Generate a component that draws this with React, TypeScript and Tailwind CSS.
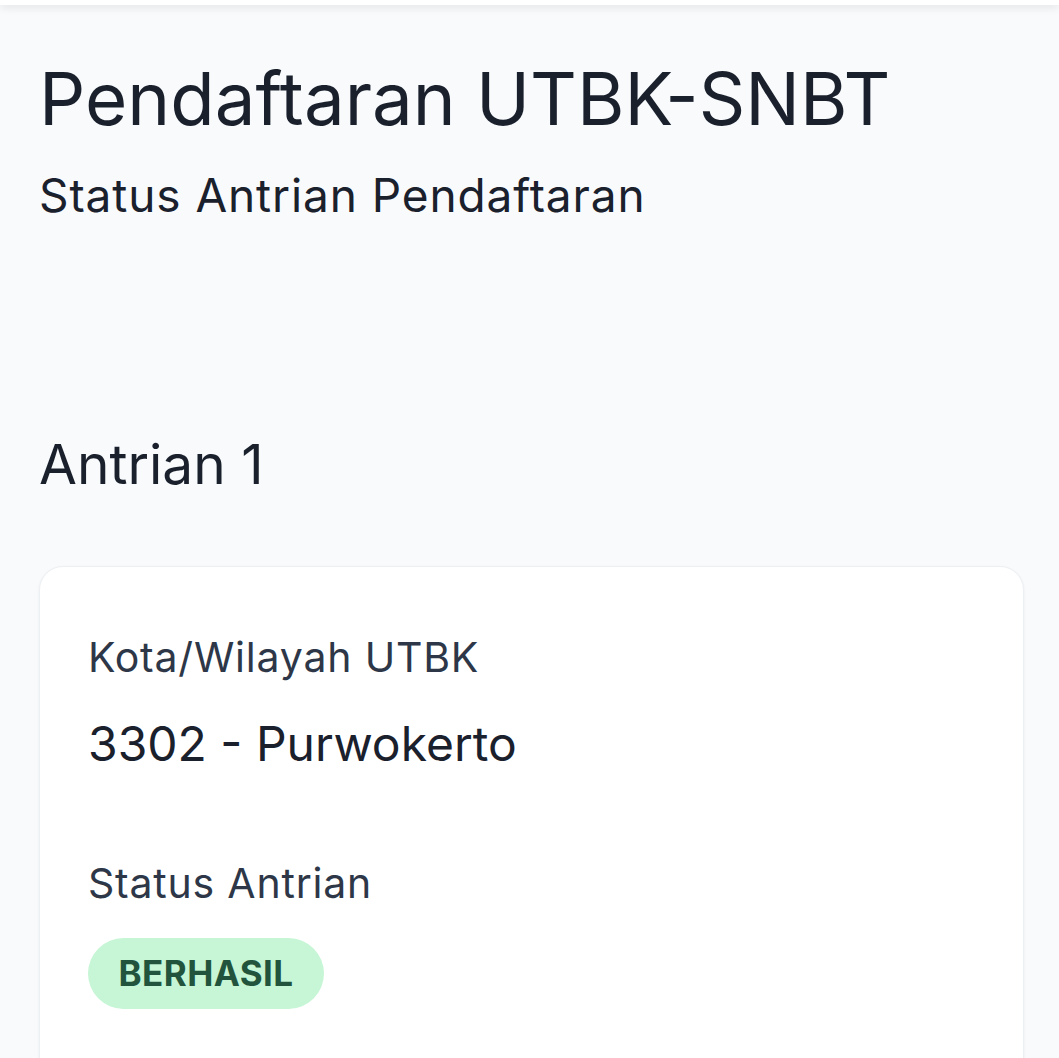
export default function App() {
  const font = { fontFamily: "Inter, 'Noto Sans', sans-serif" };
  return (
    <div style={font} className="min-h-[1058px] overflow-hidden bg-[#f8fafc] text-[#1a202c]">
      <div className="h-[5px] bg-white shadow-[0_2px_8px_rgba(0,0,0,0.12)]" />
      <div className="px-[39px] pt-[50px]">
        <h1 className="text-[72.6px] leading-[88px] font-normal">Pendaftaran UTBK-SNBT</h1>
        <p className="mt-[27px] text-[46px] leading-[50px] tracking-[0.9px]">Status Antrian Pendaftaran</p>
        <h2 className="mt-[210px] text-[55px] leading-[68px] font-normal">Antrian 1</h2>
        <div className="mt-[68px] mr-[-4px] h-[600px] rounded-[24px] border border-[#edf0f3] bg-white px-[48px] pt-[67px] shadow-[0_1px_3px_rgba(0,0,0,0.06)]">
          <p className="text-[41px] leading-[46px] tracking-[0.8px] text-[#2d3748]">Kota/Wilayah UTBK</p>
          <p className="mt-[35px] text-[48px] leading-[58px]">3302 - Purwokerto</p>
          <p className="mt-[87px] text-[41px] leading-[46px] tracking-[0.8px] text-[#2d3748]">Status Antrian</p>
          <div className="mt-[32px] inline-flex h-[71px] w-[236px] items-center justify-center rounded-full bg-[#c6f6d5] text-[35px] font-bold tracking-[0.4px] text-[#22543d]">
            BERHASIL
          </div>
        </div>
      </div>
    </div>
  );
}
